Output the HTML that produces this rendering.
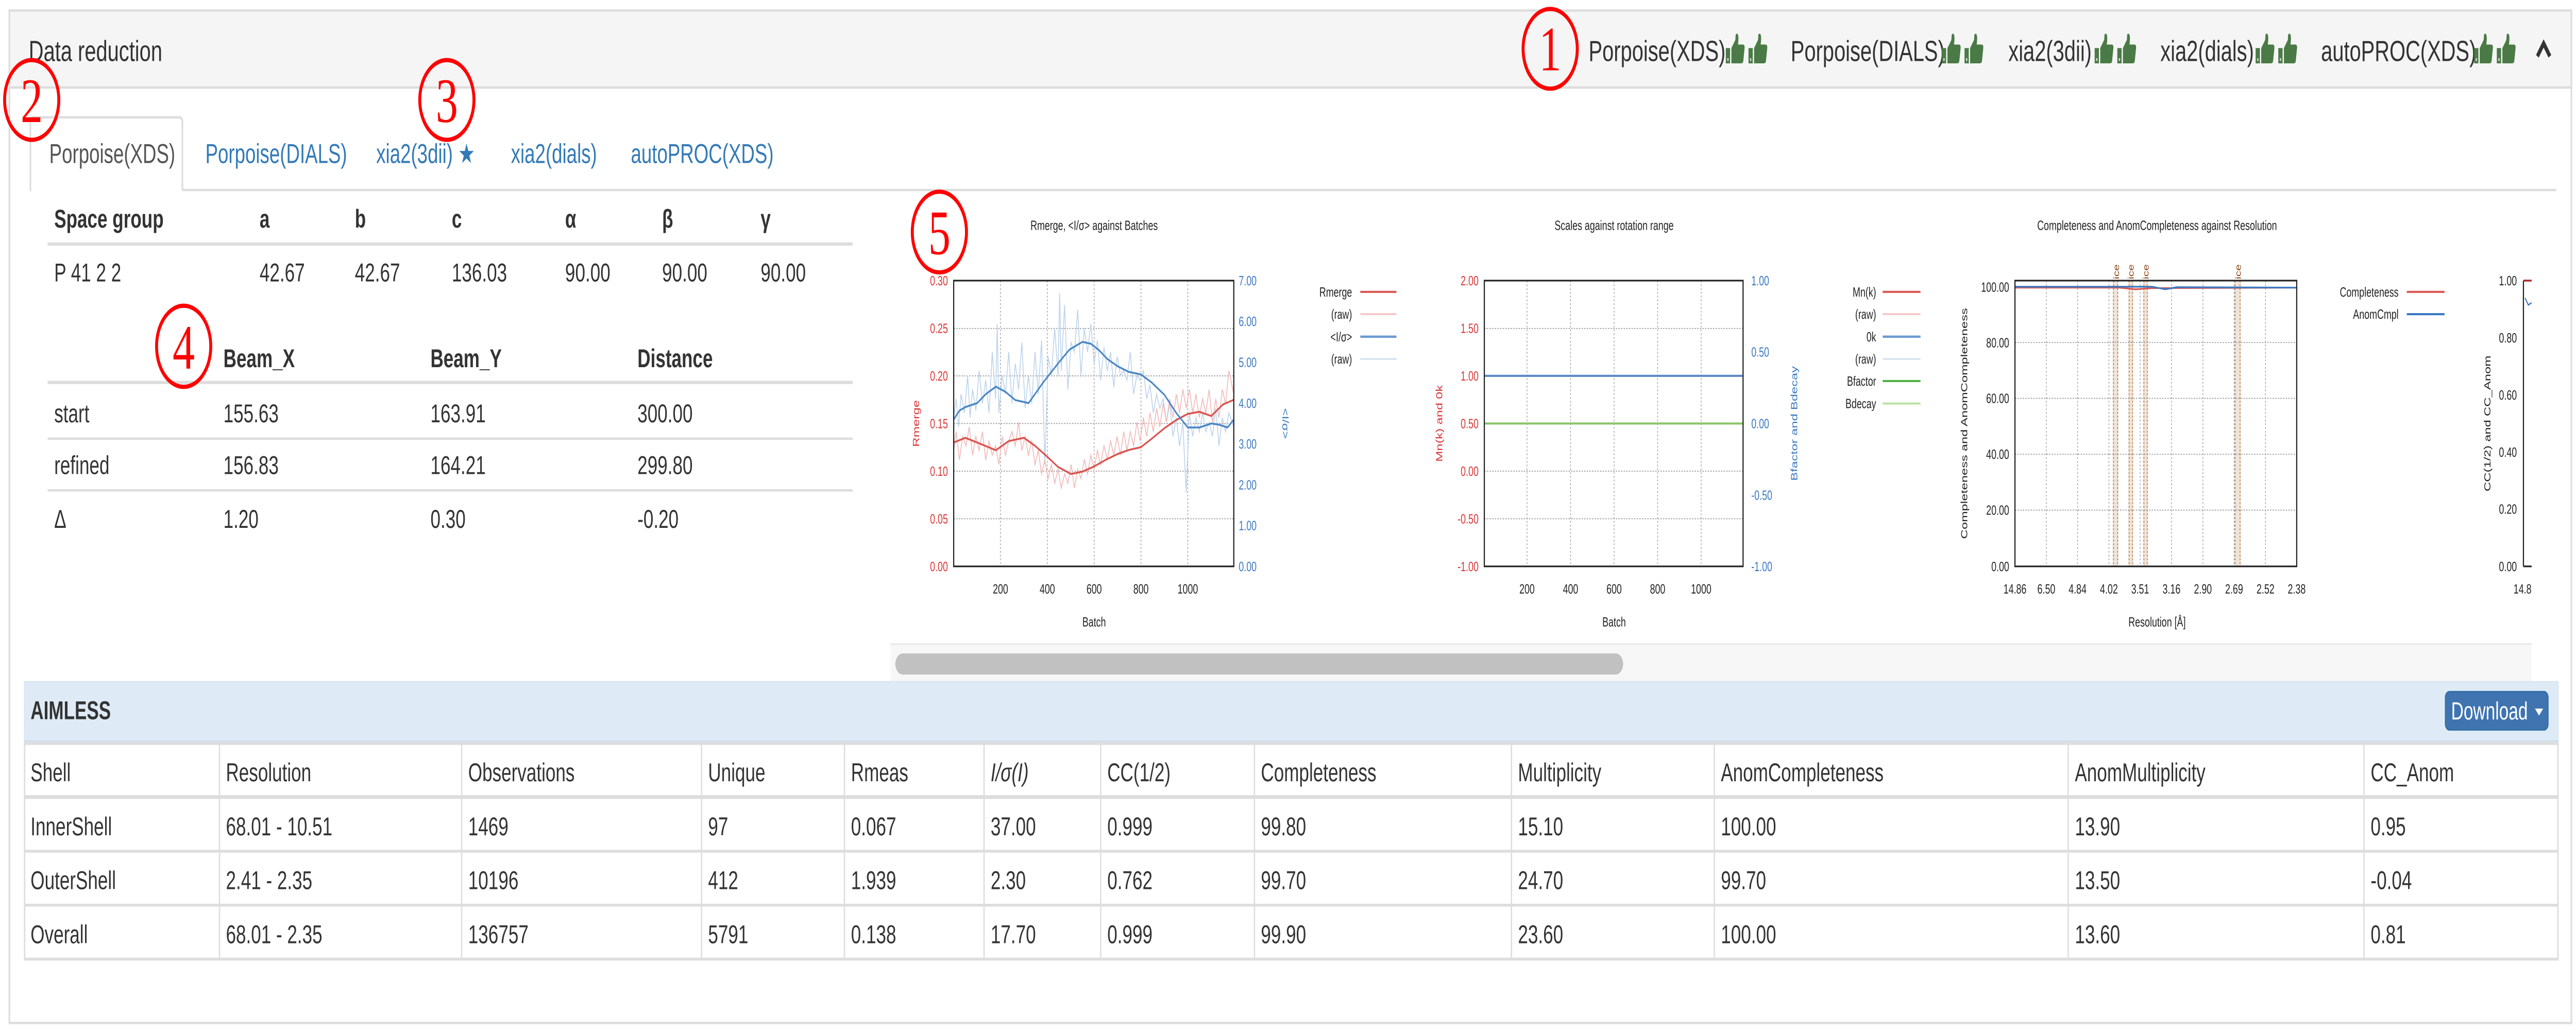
<!DOCTYPE html>
<html><head><meta charset="utf-8"><style>
html,body{margin:0;padding:0;background:#fff;width:100%;height:100%;overflow:hidden}
svg{display:block;position:absolute;left:0;top:0;width:100vw;height:100vh}
text{font-family:"Liberation Sans",Arial,sans-serif}
.c{fill:#333;font-size:11px}
.b{fill:#333;font-size:11px;font-weight:bold}
.tab{fill:#337ab7;font-size:11.5px}
.s{font-size:5.6px;fill:#222}
.r{fill:#d33}
.bl{fill:#3a78c2}
.n{font-family:"Liberation Serif",serif;font-size:27px;fill:#f00}
</style></head><body>
<svg viewBox="0 0 1568 439" preserveAspectRatio="none" xmlns="http://www.w3.org/2000/svg">
<defs>
<g id="th"><path d="M0 6.5h2.6v6.5H0z" fill="#4a7a45"/><path d="M3.4 6.5 L5.8 3 L6 0.8 Q6.6 0 7.3 0.6 Q8 1.6 7.4 5 H10.6 Q11.6 5.2 11.4 6.6 L10.6 12.2 Q10.3 13 9.4 13 H3.4 Z" fill="#4a7a45"/><rect x="0.9" y="10.8" width="0.8" height="1.2" fill="#cfe0cc"/></g>
<g id="tt"><use href="#th"/><use href="#th" x="13.8"/></g>
<clipPath id="cl"><rect x="540" y="84" width="1001" height="192"/></clipPath>
</defs>
<rect x="5.7" y="4.5" width="1559.5" height="431.5" fill="#fff" stroke="#ddd" stroke-width="1"/>
<rect x="6.2" y="5" width="1558.5" height="32.3" fill="#f5f5f5"/>
<line x1="6" y1="37.3" x2="1565" y2="37.3" stroke="#ddd" stroke-width="1"/>
<text x="17.5" y="26" style="font-size:12.5px;fill:#333">Data reduction</text>
<g style="font-size:12.5px;fill:#333">
<text x="967" y="26">Porpoise(XDS)</text><use href="#tt" x="1050.5" y="14"/>
<text x="1090" y="26">Porpoise(DIALS)</text><use href="#tt" x="1182" y="14"/>
<text x="1222.5" y="26">xia2(3dii)</text><use href="#tt" x="1275" y="14"/>
<text x="1315" y="26">xia2(dials)</text><use href="#tt" x="1373" y="14"/>
<text x="1412.8" y="26">autoPROC(XDS)</text><use href="#tt" x="1506" y="14"/>
</g>
<path d="M1544.5 24 L1548.3 18.5 L1552.1 24" fill="none" stroke="#333" stroke-width="2"/>
<line x1="111" y1="81" x2="1556" y2="81" stroke="#ddd" stroke-width="1"/>
<path d="M18.5 81.5 V52 Q18.5 50 20.5 50 H109 Q111 50 111 52 V81" fill="#fff" stroke="#ddd" stroke-width="1"/>
<text x="30" y="69.5" style="font-size:11.5px;fill:#555">Porpoise(XDS)</text>
<text x="125" y="69.5" class="tab">Porpoise(DIALS)</text>
<text x="229" y="69.5" class="tab">xia2(3dii) ★</text>
<text x="311" y="69.5" class="tab">xia2(dials)</text>
<text x="384" y="69.5" class="tab">autoPROC(XDS)</text>
<text x="33" y="97" class="b">Space group</text><text x="158" y="97" class="b">a</text><text x="216" y="97" class="b">b</text><text x="275" y="97" class="b">c</text><text x="344" y="97" class="b">α</text><text x="403" y="97" class="b">β</text><text x="463" y="97" class="b">γ</text>
<line x1="29" y1="104" x2="519" y2="104" stroke="#ddd" stroke-width="1.4"/>
<text x="33" y="120" class="c">P 41 2 2</text><text x="158" y="120" class="c">42.67</text><text x="216" y="120" class="c">42.67</text><text x="275" y="120" class="c">136.03</text><text x="344" y="120" class="c">90.00</text><text x="403" y="120" class="c">90.00</text><text x="463" y="120" class="c">90.00</text>
<text x="136" y="156.5" class="b">Beam_X</text><text x="262" y="156.5" class="b">Beam_Y</text><text x="388" y="156.5" class="b">Distance</text>
<line x1="29" y1="163" x2="519" y2="163" stroke="#ddd" stroke-width="1.4"/>
<text x="33" y="180" class="c">start</text><text x="136" y="180" class="c">155.63</text><text x="262" y="180" class="c">163.91</text><text x="388" y="180" class="c">300.00</text>
<line x1="29" y1="187" x2="519" y2="187" stroke="#ddd" stroke-width="1"/>
<text x="33" y="202" class="c">refined</text><text x="136" y="202" class="c">156.83</text><text x="262" y="202" class="c">164.21</text><text x="388" y="202" class="c">299.80</text>
<line x1="29" y1="209" x2="519" y2="209" stroke="#ddd" stroke-width="1"/>
<text x="33" y="225" class="c">Δ</text><text x="136" y="225" class="c">1.20</text><text x="262" y="225" class="c">0.30</text><text x="388" y="225" class="c">-0.20</text>
<g clip-path="url(#cl)">
<text x="666" y="98" class="s" text-anchor="middle">Rmerge, &lt;I/σ&gt; against Batches</text>
<g stroke="#999" stroke-width="0.4" stroke-dasharray="0.8,0.8">
<line x1="580.5" y1="140" x2="751" y2="140"/><line x1="580.5" y1="160.2" x2="751" y2="160.2"/><line x1="580.5" y1="180.5" x2="751" y2="180.5"/><line x1="580.5" y1="200.8" x2="751" y2="200.8"/><line x1="580.5" y1="221.1" x2="751" y2="221.1"/>
<line x1="609" y1="119.6" x2="609" y2="241.4"/><line x1="637.5" y1="119.6" x2="637.5" y2="241.4"/><line x1="666" y1="119.6" x2="666" y2="241.4"/><line x1="694.5" y1="119.6" x2="694.5" y2="241.4"/><line x1="723" y1="119.6" x2="723" y2="241.4"/>
</g>
<polyline fill="none" stroke="#bcd3ea" stroke-width="0.5" points="580.5,178 582,170 583.5,182 585,168 587,176 589,160 590.5,178 592,166 594,175 596,158 598,172 600,162 602,176 604,150 606,170 607,138 608,176 610,160 612,168 614,150 616,172 618,155 620,166 622,146 624,174 626,160 628,172 630,150 632,168 634,145 636,198 638,152 640,160 642,140 644,160 645,125 646,158 648,130 650,166 652,146 654,150 656,132 658,160 660,140 662,150 664,138 666,155 668,145 670,162 672,148 674,158 676,150 678,165 680,152 682,160 684,158 686,162 688,150 690,168 692,160 694,162 696,158 698,170 700,164 702,176 704,168 706,174 708,170 710,180 712,172 714,186 716,178 718,190 720,180 722,210 724,176 726,186 728,178 730,184 732,176 734,184 736,180 738,186 740,174 742,190 744,178 746,184 748,176 751,182"/>
<polyline fill="none" stroke="#f2b8b8" stroke-width="0.5" points="580.5,192 582,184 584,196 586,186 588,190 590,182 592,194 594,186 596,192 598,184 600,196 602,188 604,194 606,190 608,198 610,186 612,194 614,188 616,184 618,190 620,180 622,192 624,186 626,194 628,188 630,198 632,192 634,202 636,196 638,204 640,198 642,206 644,200 646,208 648,202 650,206 652,198 654,208 656,200 658,204 660,196 662,202 664,194 666,200 668,192 670,198 672,190 674,196 676,188 678,194 680,186 682,194 684,184 686,192 688,184 690,190 692,180 694,188 696,178 698,186 700,176 702,184 704,174 706,182 708,172 710,180 712,170 714,178 716,168 718,176 720,166 722,174 724,166 726,176 728,168 730,178 732,170 734,176 736,166 738,180 740,170 742,178 744,166 746,172 748,158 751,168"/>
<polyline fill="none" stroke="#d9534f" stroke-width="0.8" stroke-linejoin="round" points="580.5,188.6 587.6,186.6 594.8,188.6 606.2,191.9 614,188 623.3,186.6 630,190 637.5,194.7 644,199 651.8,202 659,201 666,198.8 673,196 680.3,193.5 687,191.8 694.5,190.6 701,187 708.8,182.5 716,179 723,176.4 730,175.5 737.3,177.3 744.4,172.4 751,170.4"/>
<polyline fill="none" stroke="#4a86c5" stroke-width="0.8" stroke-linejoin="round" points="580.5,178.8 584,175 587.6,173.5 594.8,171.8 600,168 606.2,164.8 612,167 618,170.5 626.1,171.8 635,163 644.6,154.4 651,149 658.9,145.7 664,146.5 668.9,149.2 674,153 680.3,156.1 687,158.5 694.5,159.6 701,163 708.8,168.3 716,176 723,182.2 730.1,182.2 737.3,180.5 742,181 747.2,182.2 751,178.8"/>
<rect x="580.5" y="119.6" width="170.5" height="121.8" fill="none" stroke="#222" stroke-width="0.7"/>
<g text-anchor="end"><text x="577" y="121.6" class="s r">0.30</text><text x="577" y="141.9" class="s r">0.25</text><text x="577" y="162.2" class="s r">0.20</text><text x="577" y="182.5" class="s r">0.15</text><text x="577" y="202.8" class="s r">0.10</text><text x="577" y="223.1" class="s r">0.05</text><text x="577" y="243.4" class="s r">0.00</text></g>
<g><text x="754" y="121.6" class="s bl">7.00</text><text x="754" y="139" class="s bl">6.00</text><text x="754" y="156.4" class="s bl">5.00</text><text x="754" y="173.8" class="s bl">4.00</text><text x="754" y="191.2" class="s bl">3.00</text><text x="754" y="208.6" class="s bl">2.00</text><text x="754" y="226" class="s bl">1.00</text><text x="754" y="243.4" class="s bl">0.00</text></g>
<g text-anchor="middle"><text x="609" y="253" class="s">200</text><text x="637.5" y="253" class="s">400</text><text x="666" y="253" class="s">600</text><text x="694.5" y="253" class="s">800</text><text x="723" y="253" class="s">1000</text><text x="666" y="267" class="s">Batch</text></g>
<text transform="translate(559.5,180.5) rotate(-90)" text-anchor="middle" class="s r">Rmerge</text>
<text transform="translate(780.5,180.5) rotate(90)" text-anchor="middle" class="s bl">&lt;I/σ&gt;</text>
<g text-anchor="end"><text x="823" y="126.4" class="s">Rmerge</text><text x="823" y="135.9" class="s">(raw)</text><text x="823" y="145.5" class="s">&lt;I/σ&gt;</text><text x="823" y="155" class="s">(raw)</text></g>
<line x1="828" y1="124.4" x2="850" y2="124.4" stroke="#d9534f" stroke-width="0.9"/><line x1="828" y1="133.9" x2="850" y2="133.9" stroke="#f5c0c0" stroke-width="0.7"/><line x1="828" y1="143.5" x2="850" y2="143.5" stroke="#6a9bd0" stroke-width="1"/><line x1="828" y1="153" x2="850" y2="153" stroke="#d0e0f0" stroke-width="0.7"/>
<text x="982.5" y="98" class="s" text-anchor="middle">Scales against rotation range</text>
<g stroke="#999" stroke-width="0.4" stroke-dasharray="0.8,0.8">
<line x1="903.5" y1="140" x2="1061" y2="140"/><line x1="903.5" y1="160.2" x2="1061" y2="160.2"/><line x1="903.5" y1="180.5" x2="1061" y2="180.5"/><line x1="903.5" y1="200.8" x2="1061" y2="200.8"/><line x1="903.5" y1="221.1" x2="1061" y2="221.1"/>
<line x1="929.5" y1="119.6" x2="929.5" y2="241.4"/><line x1="956" y1="119.6" x2="956" y2="241.4"/><line x1="982.5" y1="119.6" x2="982.5" y2="241.4"/><line x1="1009" y1="119.6" x2="1009" y2="241.4"/><line x1="1035.5" y1="119.6" x2="1035.5" y2="241.4"/>
</g>
<line x1="903.5" y1="160.2" x2="1061" y2="160.2" stroke="#5a8ac6" stroke-width="0.9"/>
<line x1="903.5" y1="180.5" x2="1061" y2="180.5" stroke="#8cc56a" stroke-width="0.9"/>
<rect x="903.5" y="119.6" width="157.5" height="121.8" fill="none" stroke="#222" stroke-width="0.7"/>
<g text-anchor="end"><text x="900" y="121.6" class="s r">2.00</text><text x="900" y="141.9" class="s r">1.50</text><text x="900" y="162.2" class="s r">1.00</text><text x="900" y="182.5" class="s r">0.50</text><text x="900" y="202.8" class="s r">0.00</text><text x="900" y="223.1" class="s r">-0.50</text><text x="900" y="243.4" class="s r">-1.00</text></g>
<g><text x="1066" y="121.6" class="s bl">1.00</text><text x="1066" y="152" class="s bl">0.50</text><text x="1066" y="182.5" class="s bl">0.00</text><text x="1066" y="213" class="s bl">-0.50</text><text x="1066" y="243.4" class="s bl">-1.00</text></g>
<g text-anchor="middle"><text x="929.5" y="253" class="s">200</text><text x="956" y="253" class="s">400</text><text x="982.5" y="253" class="s">600</text><text x="1009" y="253" class="s">800</text><text x="1035.5" y="253" class="s">1000</text><text x="982.5" y="267" class="s">Batch</text></g>
<text transform="translate(878,180.5) rotate(-90)" text-anchor="middle" class="s r">Mn(k) and 0k</text>
<text transform="translate(1094,180.5) rotate(-90)" text-anchor="middle" class="s bl">Bfactor and Bdecay</text>
<g text-anchor="end"><text x="1142" y="126.4" class="s">Mn(k)</text><text x="1142" y="135.9" class="s">(raw)</text><text x="1142" y="145.5" class="s">0k</text><text x="1142" y="155" class="s">(raw)</text><text x="1142" y="164.4" class="s">Bfactor</text><text x="1142" y="174" class="s">Bdecay</text></g>
<line x1="1146" y1="124.4" x2="1169" y2="124.4" stroke="#d9534f" stroke-width="0.9"/><line x1="1146" y1="133.9" x2="1169" y2="133.9" stroke="#f5c0c0" stroke-width="0.7"/><line x1="1146" y1="143.5" x2="1169" y2="143.5" stroke="#6a9bd0" stroke-width="1"/><line x1="1146" y1="153" x2="1169" y2="153" stroke="#d0e0f0" stroke-width="0.7"/><line x1="1146" y1="162.4" x2="1169" y2="162.4" stroke="#4caf3f" stroke-width="0.9"/><line x1="1146" y1="172" x2="1169" y2="172" stroke="#b5e09a" stroke-width="0.8"/>
<text x="1313" y="98" class="s" text-anchor="middle">Completeness and AnomCompleteness against Resolution</text>
<rect x="1286" y="119.6" width="3.5" height="121.8" fill="#efe4da"/><rect x="1295.5" y="119.6" width="3" height="121.8" fill="#efe4da"/><rect x="1304.5" y="119.6" width="3" height="121.8" fill="#efe4da"/><rect x="1360" y="119.6" width="4" height="121.8" fill="#efe4da"/>
<g stroke="#b5651d" stroke-width="0.4" stroke-dasharray="0.8,0.8"><line x1="1286.5" y1="119.6" x2="1286.5" y2="241.4"/><line x1="1289" y1="119.6" x2="1289" y2="241.4"/><line x1="1296" y1="119.6" x2="1296" y2="241.4"/><line x1="1298" y1="119.6" x2="1298" y2="241.4"/><line x1="1305" y1="119.6" x2="1305" y2="241.4"/><line x1="1307" y1="119.6" x2="1307" y2="241.4"/><line x1="1360.5" y1="119.6" x2="1360.5" y2="241.4"/><line x1="1363.5" y1="119.6" x2="1363.5" y2="241.4"/></g>
<text transform="translate(1289.8,119) rotate(-90)" style="font-size:5px;fill:#8b4513">ice</text><text transform="translate(1298.8,119) rotate(-90)" style="font-size:5px;fill:#8b4513">ice</text><text transform="translate(1307.8,119) rotate(-90)" style="font-size:5px;fill:#8b4513">ice</text><text transform="translate(1364,119) rotate(-90)" style="font-size:5px;fill:#8b4513">ice</text>
<g stroke="#999" stroke-width="0.4" stroke-dasharray="0.8,0.8">
<line x1="1226.5" y1="146" x2="1398" y2="146"/><line x1="1226.5" y1="169.8" x2="1398" y2="169.8"/><line x1="1226.5" y1="193.6" x2="1398" y2="193.6"/><line x1="1226.5" y1="217.4" x2="1398" y2="217.4"/>
<line x1="1245.6" y1="119.6" x2="1245.6" y2="241.4"/><line x1="1264.6" y1="119.6" x2="1264.6" y2="241.4"/><line x1="1283.7" y1="119.6" x2="1283.7" y2="241.4"/><line x1="1302.7" y1="119.6" x2="1302.7" y2="241.4"/><line x1="1321.8" y1="119.6" x2="1321.8" y2="241.4"/><line x1="1340.9" y1="119.6" x2="1340.9" y2="241.4"/><line x1="1359.9" y1="119.6" x2="1359.9" y2="241.4"/><line x1="1379" y1="119.6" x2="1379" y2="241.4"/>
</g>
<polyline fill="none" stroke="#d9534f" stroke-width="0.7" points="1226.5,122.6 1290,122.6 1300,123.3 1310,122.8 1398,122.6"/>
<polyline fill="none" stroke="#3a78c2" stroke-width="0.7" points="1226.5,122.2 1310,122.2 1318,123.3 1325,122.4 1398,122.6"/>
<rect x="1226.5" y="119.6" width="171.5" height="121.8" fill="none" stroke="#222" stroke-width="0.7"/>
<g text-anchor="end"><text x="1223" y="124.3" class="s">100.00</text><text x="1223" y="148" class="s">80.00</text><text x="1223" y="171.8" class="s">60.00</text><text x="1223" y="195.6" class="s">40.00</text><text x="1223" y="219.4" class="s">20.00</text><text x="1223" y="243.4" class="s">0.00</text></g>
<g text-anchor="middle"><text x="1226.5" y="253" class="s">14.86</text><text x="1245.6" y="253" class="s">6.50</text><text x="1264.6" y="253" class="s">4.84</text><text x="1283.7" y="253" class="s">4.02</text><text x="1302.7" y="253" class="s">3.51</text><text x="1321.8" y="253" class="s">3.16</text><text x="1340.9" y="253" class="s">2.90</text><text x="1359.9" y="253" class="s">2.69</text><text x="1379" y="253" class="s">2.52</text><text x="1398" y="253" class="s">2.38</text><text x="1313" y="267" class="s">Resolution [Å]</text></g>
<text transform="translate(1197.5,180.5) rotate(-90)" text-anchor="middle" class="s">Completeness and AnomCompleteness</text>
<g text-anchor="end"><text x="1460" y="126.4" class="s">Completeness</text><text x="1460" y="135.9" class="s">AnomCmpl</text></g>
<line x1="1465" y1="124.4" x2="1488" y2="124.4" stroke="#d9534f" stroke-width="0.9"/><line x1="1465" y1="133.9" x2="1488" y2="133.9" stroke="#3a78c2" stroke-width="0.9"/>
<text transform="translate(1516,180.5) rotate(-90)" text-anchor="middle" class="s">CC(1/2) and CC_Anom</text>
<g text-anchor="end"><text x="1532" y="121.6" class="s">1.00</text><text x="1532" y="146" class="s">0.80</text><text x="1532" y="170.3" class="s">0.60</text><text x="1532" y="194.7" class="s">0.40</text><text x="1532" y="219" class="s">0.20</text><text x="1532" y="243.4" class="s">0.00</text></g>
<text x="1537" y="253" class="s" text-anchor="middle">14.86</text>
<line x1="1536" y1="119.6" x2="1536" y2="241.4" stroke="#222" stroke-width="0.7"/>
<line x1="1536" y1="119.6" x2="1545" y2="119.6" stroke="#a33" stroke-width="0.8"/>
<line x1="1536" y1="241.4" x2="1545" y2="241.4" stroke="#222" stroke-width="0.7"/>
<polyline fill="none" stroke="#3a78c2" stroke-width="0.6" points="1537,127 1539,130 1541,129"/>
</g>
<rect x="542" y="274.5" width="999" height="17" fill="#f7f7f7"/>
<line x1="542" y1="274.5" x2="1541" y2="274.5" stroke="#e6e6e6" stroke-width="0.6"/>
<rect x="545" y="278.5" width="443" height="9" rx="4.5" fill="#c1c1c1"/>
<rect x="15" y="290.7" width="1542" height="118.3" fill="#fff" stroke="#d6e2ee" stroke-width="0.8"/>
<rect x="15" y="290.7" width="1542" height="25" fill="#deebf6"/>
<line x1="15" y1="316" x2="1557" y2="316" stroke="#d0dbe6" stroke-width="0.8"/>
<text x="18.6" y="306.5" style="font-size:11px;font-weight:bold;fill:#333">AIMLESS</text>
<rect x="1488.5" y="294.8" width="62.5" height="16.3" rx="2.5" fill="#3f74b0" stroke="#2e6da4" stroke-width="0.6"/>
<text x="1492" y="306.6" style="font-size:10.5px;fill:#fff">Download</text>
<path d="M1543 302 L1548 302 L1545.5 305 Z" fill="#fff"/>
<g stroke="#ddd" stroke-width="0.8">
<line x1="133.6" y1="317" x2="133.6" y2="409"/><line x1="281" y1="317" x2="281" y2="409"/><line x1="427" y1="317" x2="427" y2="409"/><line x1="514" y1="317" x2="514" y2="409"/><line x1="599" y1="317" x2="599" y2="409"/><line x1="670" y1="317" x2="670" y2="409"/><line x1="763.6" y1="317" x2="763.6" y2="409"/><line x1="920" y1="317" x2="920" y2="409"/><line x1="1043.5" y1="317" x2="1043.5" y2="409"/><line x1="1258.9" y1="317" x2="1258.9" y2="409"/><line x1="1438.9" y1="317" x2="1438.9" y2="409"/><line x1="1557" y1="317" x2="1557" y2="409"/><line x1="15" y1="317" x2="15" y2="409"/>
</g>
<g stroke="#ddd"><line x1="15" y1="317" x2="1557" y2="317" stroke-width="1"/><line x1="15" y1="339.7" x2="1557" y2="339.7" stroke-width="1.6"/><line x1="15" y1="362.8" x2="1557" y2="362.8" stroke-width="1.2"/><line x1="15" y1="385.8" x2="1557" y2="385.8" stroke-width="1.2"/><line x1="15" y1="408.8" x2="1557" y2="408.8" stroke-width="1.2"/></g>
<text x="18.6" y="333" class="c">Shell</text><text x="137.5" y="333" class="c">Resolution</text><text x="285" y="333" class="c">Observations</text><text x="431" y="333" class="c">Unique</text><text x="518" y="333" class="c">Rmeas</text><text x="603" y="333" class="c" font-style="italic">I/σ(I)</text><text x="674" y="333" class="c">CC(1/2)</text><text x="767.5" y="333" class="c">Completeness</text><text x="924" y="333" class="c">Multiplicity</text><text x="1047.5" y="333" class="c">AnomCompleteness</text><text x="1263" y="333" class="c">AnomMultiplicity</text><text x="1443" y="333" class="c">CC_Anom</text>
<text x="18.6" y="356" class="c">InnerShell</text><text x="137.5" y="356" class="c">68.01 - 10.51</text><text x="285" y="356" class="c">1469</text><text x="431" y="356" class="c">97</text><text x="518" y="356" class="c">0.067</text><text x="603" y="356" class="c">37.00</text><text x="674" y="356" class="c">0.999</text><text x="767.5" y="356" class="c">99.80</text><text x="924" y="356" class="c">15.10</text><text x="1047.5" y="356" class="c">100.00</text><text x="1263" y="356" class="c">13.90</text><text x="1443" y="356" class="c">0.95</text>
<text x="18.6" y="379" class="c">OuterShell</text><text x="137.5" y="379" class="c">2.41 - 2.35</text><text x="285" y="379" class="c">10196</text><text x="431" y="379" class="c">412</text><text x="518" y="379" class="c">1.939</text><text x="603" y="379" class="c">2.30</text><text x="674" y="379" class="c">0.762</text><text x="767.5" y="379" class="c">99.70</text><text x="924" y="379" class="c">24.70</text><text x="1047.5" y="379" class="c">99.70</text><text x="1263" y="379" class="c">13.50</text><text x="1443" y="379" class="c">-0.04</text>
<text x="18.6" y="402" class="c">Overall</text><text x="137.5" y="402" class="c">68.01 - 2.35</text><text x="285" y="402" class="c">136757</text><text x="431" y="402" class="c">5791</text><text x="518" y="402" class="c">0.138</text><text x="603" y="402" class="c">17.70</text><text x="674" y="402" class="c">0.999</text><text x="767.5" y="402" class="c">99.90</text><text x="924" y="402" class="c">23.60</text><text x="1047.5" y="402" class="c">100.00</text><text x="1263" y="402" class="c">13.60</text><text x="1443" y="402" class="c">0.81</text>
<g fill="none" stroke="#f00" stroke-width="1.8">
<ellipse cx="943.6" cy="20.8" rx="16.5" ry="17"/>
<ellipse cx="19.3" cy="42.6" rx="16.5" ry="17"/>
<ellipse cx="272" cy="42.6" rx="16.5" ry="17"/>
<ellipse cx="111.8" cy="147.6" rx="16.5" ry="17.3"/>
<ellipse cx="571.8" cy="98.9" rx="16.5" ry="17.2"/>
</g>
<g text-anchor="middle">
<text x="943.6" y="30" class="n">1</text>
<text x="19.3" y="52" class="n">2</text>
<text x="272" y="52" class="n">3</text>
<text x="111.8" y="157" class="n">4</text>
<text x="571.8" y="108.3" class="n">5</text>
</g>
</svg>
</body></html>
